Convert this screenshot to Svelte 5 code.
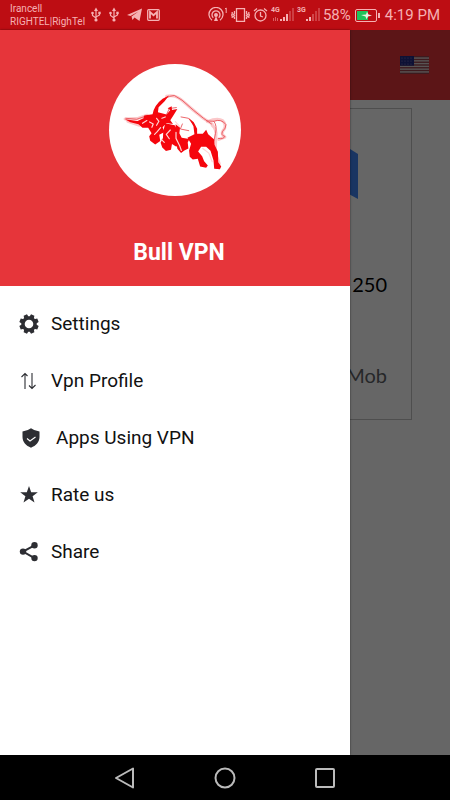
<script>
  const items = [
    { label: 'Settings', icon: 'gear' },
    { label: 'Vpn Profile', icon: 'arrows' },
    { label: 'Apps Using VPN', icon: 'shield', inset: true },
    { label: 'Rate us', icon: 'star' },
    { label: 'Share', icon: 'share' }
  ];
  const teeth = [0, 45, 90, 135, 180, 225, 270, 315];
  const stripes = [0, 1, 2, 3, 4, 5, 6];
  const starRows = [2, 5, 8];
  const starCols = [2, 5, 8, 11];
</script>

{#snippet usb()}
  <svg class="usb" width="10" height="16" viewBox="0 0 10 16" fill="none" stroke="currentColor" stroke-width="1.2" aria-hidden="true">
    <path d="M5 3v9M1.5 6v2.5L5 11M8.500 6v2L5 10" />
    <path d="M5 0.500 7 4H3Z" fill="currentColor" stroke="none" />
    <circle cx="5" cy="13" r="1.600" fill="currentColor" stroke="none" />
    <circle cx="1.500" cy="6" r="1.300" fill="currentColor" stroke="none" />
    <path d="M7.300 4.700h2.400v2.400H7.300z" fill="currentColor" stroke="none" />
  </svg>
{/snippet}

{#snippet signal(net, strong)}
  <span class="signal">
    <small>{net}</small>
    <svg width="22" height="16" viewBox="0 0 22 16" fill="currentColor" aria-hidden="true">
      {#if strong}
        <path d="M1 11h1v3H1zM3 10h1v4H3zM5 11h1v3H5z" opacity=".5" />
      {/if}
      <path d="M8 12h2v2H8zM11 10h2v4h-2z" />
      <path d="M14 7h2v7h-2z" opacity={strong ? 1 : 0.35} />
      <path d="M17 4h2v10h-2zM20 1h2v13h-2z" opacity=".3" />
    </svg>
  </span>
{/snippet}

<div class="phone">
  <header class="status">
    <div class="carrier"><span>Irancell</span><span>RIGHTEL|RighTel</span></div>
    <div class="notices">
      {@render usb()}
      {@render usb()}
      <svg width="15" height="14" viewBox="0 0 15 14" fill="currentColor" aria-hidden="true">
        <path d="M0 7 15 0.500 12.500 13 7.500 9.500 5.500 12 4.500 8.500 11.500 3.500 3.500 8Z" />
      </svg>
      <svg width="13" height="12" viewBox="0 0 13 12" aria-hidden="true">
        <rect x=".7" y=".7" width="11.600" height="10.600" rx="1" fill="none" stroke="currentColor" stroke-width="1.300" />
        <path d="M3 9.500V3l3.500 3.200L10 3v6.500" fill="none" stroke="currentColor" stroke-width="1.800" />
      </svg>
    </div>
    <div class="system">
      <svg width="20" height="16" viewBox="0 0 20 16" fill="none" stroke="currentColor" stroke-width="1.300" aria-hidden="true">
        <path d="M4 13.200a7 7 0 1 1 8 0M5.300 10.800a4 4 0 1 1 5.400 0" />
        <circle cx="8" cy="8" r="1.300" fill="currentColor" />
        <path d="M6 14l2-5 2 5z" fill="currentColor" stroke="none" />
        <path d="M17 2l1.200-1v5" stroke-width="1" />
      </svg>
      <svg width="19" height="16" viewBox="0 0 19 16" fill="none" stroke="currentColor" stroke-width="1.300" aria-hidden="true">
        <path d="M5.500 1.600h8v12.800h-8z" />
        <path d="M3.500 4v2.500l-1 1 1 1-1 1 1 1V12M1.200 5v2l-.6 1 .6 1v2M15.500 4v2.500l1 1-1 1 1 1-1 1V12M17.800 5v2l.6 1-.6 1v2" />
      </svg>
      <svg width="15" height="16" viewBox="0 0 15 16" fill="none" stroke="currentColor" stroke-width="1.300" aria-hidden="true">
        <circle cx="7.500" cy="8.500" r="5.500" />
        <path d="M7.500 5v4l2.500 1M1 4l3-2.500M14 4l-3-2.500" />
      </svg>
      {@render signal('4G', true)}
      {@render signal('3G', false)}
      <span class="percent">58%</span>
      <svg class="battery" width="26" height="13" viewBox="0 0 26 13" aria-hidden="true">
        <rect x=".5" y=".5" width="21" height="12" rx="1.500" fill="none" stroke="currentColor" />
        <path d="M2 2h11v9H2z" fill="#1fc45a" />
        <path d="M6 6l5-.6 1-2.600 1.500 2.700 3.500 1-4 1-1.500 2.700-1-2.700z" fill="#e8f5e2" />
        <path d="M23 4h2v5h-2z" fill="currentColor" />
      </svg>
      <time>4:19 PM</time>
    </div>
  </header>

  <div class="stage">
    <main class="page">
      <div class="appbar">
        <button class="flag" aria-label="Server country">
          <svg width="29" height="18" viewBox="0 0 29 18" aria-hidden="true">
            <path d="M0 0h29v18H0z" fill="#dcd3d3" />
            {#each stripes as s}
              <rect x="0" y={s * 2.77} width="29" height="1.380" fill="#98414c" />
            {/each}
            <path d="M0 0h14v9.700H0z" fill="#252b86" />
            {#each starRows as y}
              {#each starCols as x}
                <circle cx={x} cy={y} r=".6" fill="#8888bd" />
              {/each}
            {/each}
          </svg>
        </button>
      </div>
      <section class="card">
        <svg class="mark" width="24" height="60" viewBox="0 0 24 60" aria-hidden="true">
          <path d="M0 0 24 15V60L0 47Z" fill="#4285f4" />
        </svg>
        <p class="amount">250</p>
        <p class="kind">Mob</p>
      </section>
    </main>
    <div class="scrim"></div>

    <aside class="drawer">
      <div class="brand">
        <svg class="logo" viewBox="28 28 394 394" role="img" aria-label="Bull">
          <circle cx="225" cy="225" r="197" fill="#fff" />
          <g fill="none" stroke="#fbc8ca" stroke-width="9" stroke-linecap="round" stroke-linejoin="round">
            <path d="M200 124Q225 118 245 136L280 166 308 189 336 207" />
            <path d="M322 200Q352 188 367 197 382 211 368 228 361 237 374 246L356 253M336 211Q350 222 347 244L345 290 357 326" />
            <path d="M76 192 112 191 142 181M84 199 119 211" />
          </g>
          <g fill="none" stroke="#e84a50" stroke-width="2.500" stroke-linecap="round" stroke-linejoin="round">
            <path d="M178 151Q192 124 223 122L246 136 280 166 310 190 334 207" />
            <path d="M320 198 341 199Q351 212 346 235L341 258M341 199Q364 190 377 209 377 220 367 229 361 241 374 244 369 254 354 250" />
            <path d="M78 190 111 193 142 182M200 178 208 161 229 158M243 186 265 190 284 213 288 233M247 207 241 222 266 227M231 248 243 287" />
          </g>
          <g fill="#f5060d">
            <path d="M158 178Q163 151 188 132L207 122 194 139 176 157 174 172 200 179 211 165 203 160 215 154 216 165 232 162 222 179 211 196 219 207 200 204 188 217 194 231 178 239 181 258 166 268 151 257 148 244 155 235 145 218 128 218 116 208 92 202 75 193 113 198 131 190 133 182Z" />
            <path d="M196 205 224 211 235 230 231 248 239 272 228 274 216 267 213 284 198 288 187 277 182 263 189 249 190 229Z" />
            <path d="M227 208 240 218 238 235 245 248 268 252 263 262 265 280 253 286 243 294 232 281 226 247Z" />
            <path d="M266 189 281 202 291 221 291 236 308 236 318 224 324 238 342 253 343 269 353 290 354 321 363 334 359 342 342 341 340 316 331 287 318 275 303 275 294 289 306 303 312 318 323 331 318 338 300 334 293 311 278 313 269 305 267 286 273 266 262 248 283 238 280 214Z" />
          </g>
          <g fill="none" stroke="#ffd6d6" stroke-width="3.500" stroke-linecap="round" stroke-linejoin="round">
            <path d="M149 201 160 207 156 217M170 190 177 199 170 211M182 218 172 230 164 238M196 186 186 190M211 225 199 238 208 251M228 232 228 250 239 272 244 286M226 200 239 214M184 253 193 262M128 205 141 197M308 280 326 294 336 320" />
          </g>
        </svg>
        <h1>Bull VPN</h1>
      </div>
      <nav>
        <ul>
          {#each items as item}
            <li>
              <a href="#{item.icon}" class:inset={item.inset}>
                <svg width="20" height="20" viewBox="0 0 20 20" aria-hidden="true">
                  {#if item.icon === 'gear'}
                    <circle cx="10" cy="10" r="6" fill="none" stroke="currentColor" stroke-width="3.400" />
                    {#each teeth as t}
                      <path d="M7.600 3.500 8.200.3h3.600L12.400 3.500z" fill="currentColor" transform="rotate({t + 22.5} 10 10)" />
                    {/each}
                  {:else if item.icon === 'arrows'}
                    <path d="M6 18V2.500M2.500 6 6 2.500 8.500 5M13 2v15.500M10 14.500l3 3 3.500-3.500" fill="none" stroke="currentColor" stroke-width="1.100" />
                  {:else if item.icon === 'shield'}
                    <path d="M10 .3Q13.500 3 18.500 3.500V9c0 5-3.500 8.700-8.500 10.700C5 17.700 1.500 14 1.500 9V3.500Q6.500 3 10 .3Z" fill="currentColor" />
                    <path d="M6 10.500 9 13l5.500-4" fill="none" stroke="#fff" stroke-width="1.100" />
                  {:else if item.icon === 'star'}
                    <path d="M10 1 12.200 7.200 18.800 7.300 13.600 11.200 15.500 17.500 10 13.800 4.500 17.500 6.400 11.200 1.200 7.300 7.800 7.200Z" fill="currentColor" />
                  {:else}
                    <path d="M15.500 3.300 4 9.600l11.500 6.500" fill="none" stroke="currentColor" stroke-width="2" />
                    <g fill="currentColor"><circle cx="15.500" cy="3.300" r="3.200" /><circle cx="4" cy="9.600" r="3.200" /><circle cx="15.500" cy="16.100" r="3.200" /></g>
                  {/if}
                </svg>
                <span>{item.label}</span>
              </a>
            </li>
          {/each}
        </ul>
      </nav>
    </aside>
  </div>

  <footer class="keys">
    <button aria-label="Back">
      <svg width="22" height="22" viewBox="0 0 22 22" aria-hidden="true"><path d="M19 1.500v19L2 11Z" /></svg>
    </button>
    <button aria-label="Home">
      <svg width="22" height="22" viewBox="0 0 22 22" aria-hidden="true"><circle cx="11" cy="11" r="9.500" /></svg>
    </button>
    <button aria-label="Recent apps">
      <svg width="22" height="22" viewBox="0 0 22 22" aria-hidden="true"><rect x="2" y="2" width="18" height="18" rx="1" /></svg>
    </button>
  </footer>
</div>

<style>
  :global(body) {
    margin: 0;
  }
  .phone {
    display: flex;
    flex-direction: column;
    min-height: 100vh;
    font-family: Roboto, 'Liberation Sans', sans-serif;
    background: #000;
  }
  svg {
    display: block;
    flex: none;
  }
  button {
    padding: 0;
    border: 0;
    background: none;
  }
  .status {
    display: flex;
    align-items: center;
    height: 30px;
    padding: 0 10px;
    color: #f5b1b3;
    background: #bd0d13;
    white-space: nowrap;
  }
  .carrier {
    display: flex;
    flex-direction: column;
    width: 76px;
    font-size: 10px;
    line-height: 13px;
  }
  .notices {
    display: flex;
    align-items: center;
    gap: 5px;
    padding-left: 5px;
  }
  .usb {
    margin-right: 3px;
  }
  .system {
    display: flex;
    align-items: center;
    gap: 3px;
    margin-left: auto;
  }
  .signal {
    display: flex;
    flex-direction: column;
    position: relative;
    width: 23px;
    align-items: flex-end;
  }
  .signal small {
    position: absolute;
    top: -1px;
    left: 0;
    font-size: 7px;
    font-weight: 700;
    line-height: 8px;
  }
  .percent,
  time {
    font-size: 15px;
    line-height: 20px;
  }
  .battery {
    margin: 0 1px;
  }
  .stage {
    position: relative;
    display: flex;
    flex: 1;
  }
  .page {
    flex: 1;
    background: #fff;
  }
  .appbar {
    display: flex;
    align-items: center;
    justify-content: flex-end;
    height: 70px;
    padding: 0 21px;
    background: #e6353a;
  }
  .card {
    display: flex;
    flex-direction: column;
    align-items: flex-end;
    box-sizing: border-box;
    height: 312px;
    margin: 8px 38px;
    padding: 30px 24px;
    border: 1px solid #c4c4c4;
    font-family: Lato, Roboto, sans-serif;
    font-size: 20px;
    line-height: 24px;
  }
  .card p {
    margin: 0;
  }
  .mark {
    margin-right: 29px;
  }
  .amount {
    padding-top: 73px;
    color: #000;
  }
  .kind {
    padding-top: 67px;
    color: #5f6368;
  }
  .scrim {
    position: absolute;
    inset: 0;
    background: rgba(0, 0, 0, 0.6);
  }
  .drawer {
    position: absolute;
    inset: 0 100px 0 0;
    background: #fff;
    box-shadow: 0 0 2px #0008;
  }
  .brand {
    display: flex;
    flex-direction: column;
    align-items: center;
    box-sizing: border-box;
    height: 256px;
    padding-top: 34px;
    background: #e6353a;
  }
  .logo {
    width: 132px;
    height: 132px;
  }
  h1 {
    margin: 42px 0 0;
    padding-left: 8px;
    color: #fff;
    font-size: 23px;
    font-weight: 700;
    line-height: 30px;
  }
  ul {
    margin: 0;
    padding: 9px 0;
    list-style: none;
  }
  a {
    display: flex;
    align-items: center;
    gap: 12px;
    height: 57px;
    padding: 0 19px;
    color: #2d2e33;
    text-decoration: none;
    font-size: 19px;
    line-height: 24px;
  }
  a span {
    color: #111;
  }
  .inset {
    gap: 15px;
    padding-left: 21px;
  }
  .keys {
    display: flex;
    align-items: center;
    justify-content: center;
    gap: 78px;
    height: 45px;
    background: #000;
  }
  .keys svg {
    fill: none;
    stroke: #bbb;
    stroke-width: 2;
    stroke-linejoin: round;
  }
</style>
